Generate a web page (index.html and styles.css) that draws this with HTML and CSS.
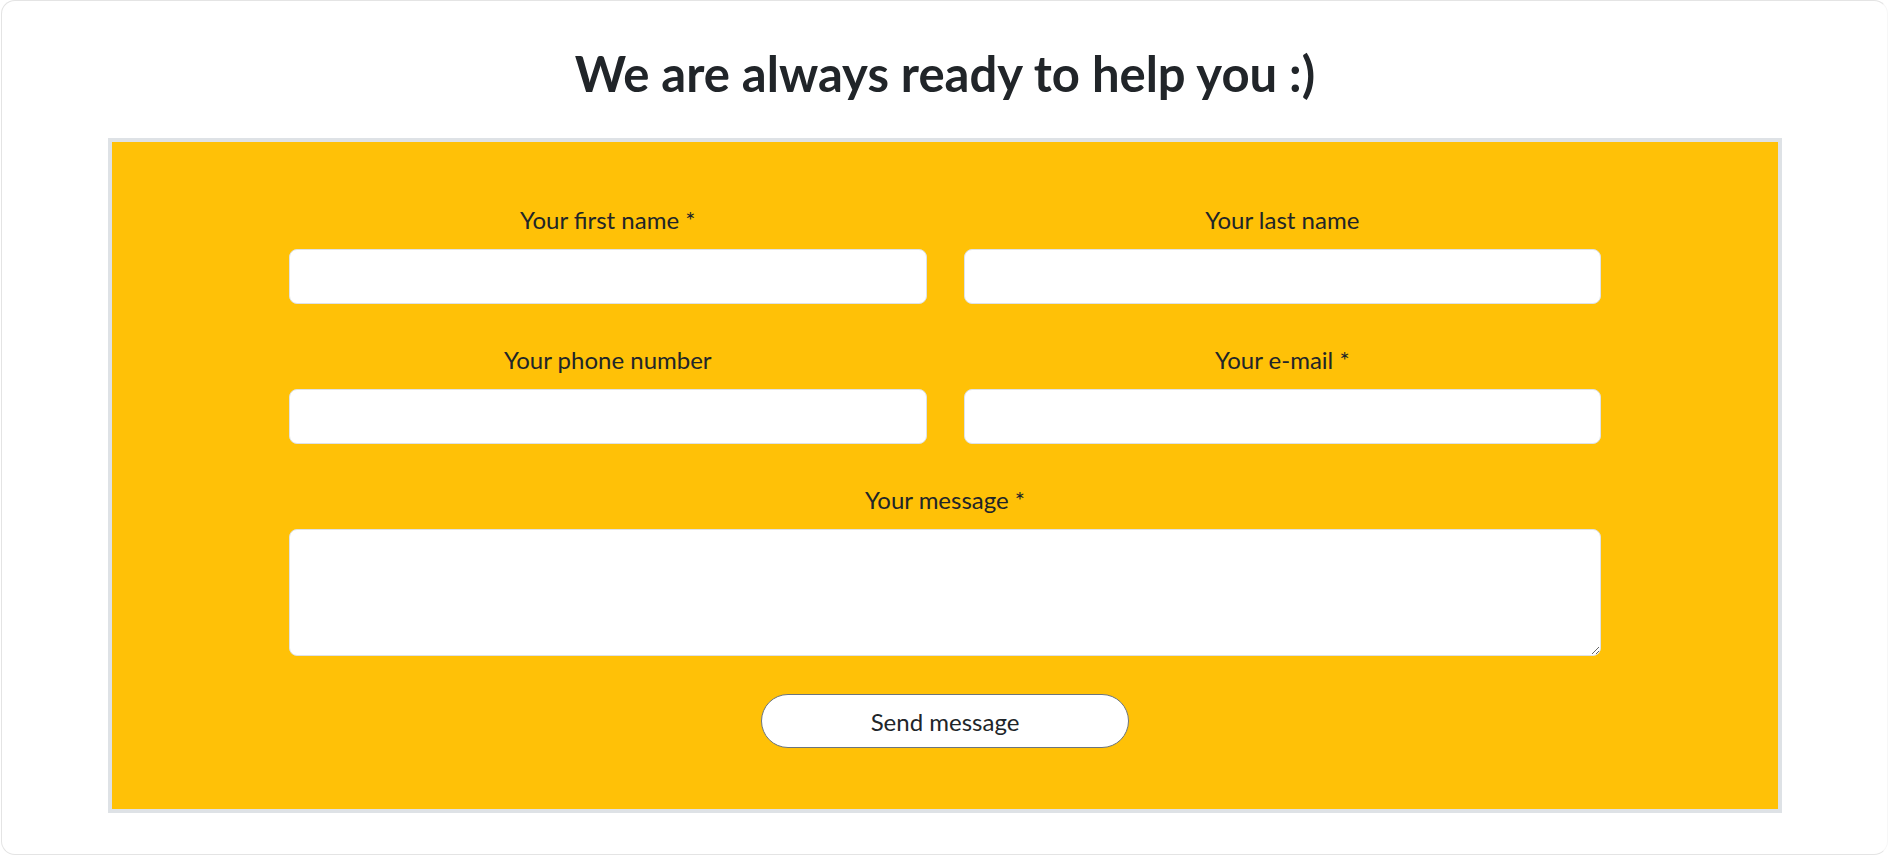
FILE: index.html
```html
<!DOCTYPE html>
<html lang="en">
<head>
<meta charset="utf-8">
<title>Contact</title>
<link rel="stylesheet" href="styles.css">
</head>
<body>
<div class="card">
  <h1 class="title">We are always ready to help you :)</h1>
  <div class="panel">
    <form class="form">
      <div class="grid">
        <div class="field">
          <label class="label" for="fn">Your first name *</label>
          <input class="input" id="fn" type="text">
        </div>
        <div class="field">
          <label class="label" for="ln">Your last name</label>
          <input class="input" id="ln" type="text">
        </div>
        <div class="field">
          <label class="label" for="ph">Your phone number</label>
          <input class="input" id="ph" type="text">
        </div>
        <div class="field">
          <label class="label" for="em">Your e-mail *</label>
          <input class="input" id="em" type="text">
        </div>
        <div class="field wide">
          <label class="label" for="msg">Your message *</label>
          <textarea class="input textarea" id="msg"></textarea>
        </div>
      </div>
      <div class="actions">
        <button class="send" type="button">Send message</button>
      </div>
    </form>
  </div>
</div>
</body>
</html>
```
FILE: styles.css
```css
html, body {
  margin: 0;
  padding: 0;
  background: #fff;
  overflow: hidden;
}
body {
  font-family: Lato, "Noto Sans", sans-serif;
  color: #212529;
}
.card {
  box-sizing: border-box;
  margin-left: 1px;
  width: 1887px;
  height: 855px;
  border: 1px solid #e4e4e4;
  border-right-color: #f7f7f7;
  border-radius: 14px;
  padding: 0 105px 0 106px;
}
.title {
  margin: 44px 0 37px;
  font-size: 49px;
  line-height: 56px;
  font-weight: 700;
  text-align: center;
  color: #212529;
}
.panel {
  background: #ffc107;
  border: 4px solid #dee2e6;
  padding: 63px 0 61px;
}
.form {
  width: 1312px;
  margin: 0 auto;
}
.grid {
  display: grid;
  grid-template-columns: 1fr 1fr;
  column-gap: 37px;
  row-gap: 41px;
}
.field {
  display: flex;
  flex-direction: column;
}
.wide {
  grid-column: 1 / -1;
}
.label {
  text-align: center;
  font-size: 24px;
  line-height: 30px;
  margin-bottom: 14px;
}
.input {
  box-sizing: border-box;
  height: 55px;
  width: 100%;
  border: 1px solid #dee2e6;
  border-radius: 8px;
  background: #fff;
  font: inherit;
  font-size: 20px;
  padding: 8px 16px;
  margin: 0;
}
.textarea {
  height: 127px;
  resize: vertical;
  display: block;
}
.actions {
  display: flex;
  justify-content: center;
  margin-top: 38px;
}
.send {
  box-sizing: border-box;
  width: 368px;
  height: 54px;
  background: #fff;
  border: 1px solid #6c757d;
  border-radius: 27px;
  font-family: inherit;
  font-size: 24px;
  color: #212529;
  cursor: pointer;
}
```
